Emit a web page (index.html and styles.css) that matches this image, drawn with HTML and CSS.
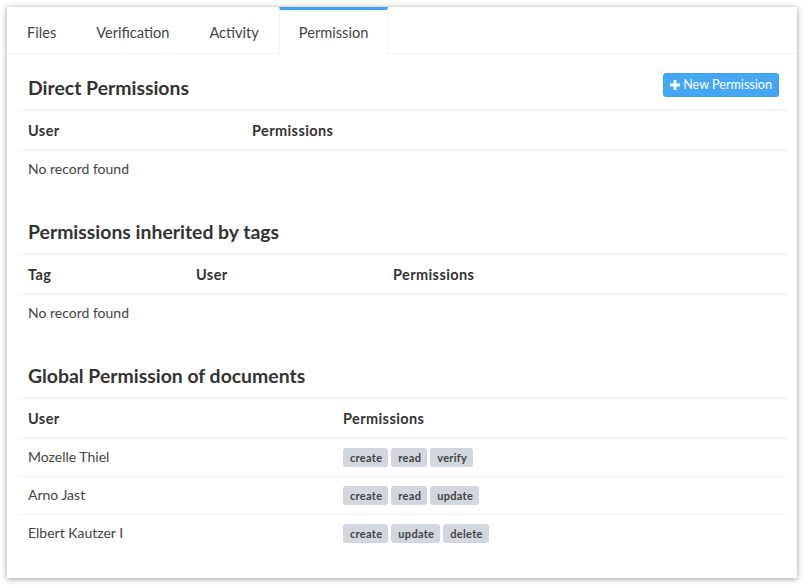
FILE: index.html
```html
<!DOCTYPE html>
<html>
<head>
<meta charset="utf-8">
<link rel="stylesheet" href="styles.css">
</head>
<body>
<div class="card">
  <ul class="tabs">
    <li class="tab">Files</li>
    <li class="tab">Verification</li>
    <li class="tab">Activity</li>
    <li class="tab active">Permission</li>
  </ul>
  <div class="content">
    <section class="section">
      <div class="section-head">
        <h3 class="title">Direct Permissions</h3>
        <button class="btn"><svg class="plus" viewBox="0 0 10 10" width="10" height="10"><path d="M3.6 0h2.8v3.6H10v2.8H6.4V10H3.6V6.4H0V3.6h3.6z" fill="#fff"/></svg>New Permission</button>
      </div>
      <table class="tbl">
        <colgroup><col class="c1a"><col></colgroup>
        <thead><tr><th>User</th><th>Permissions</th></tr></thead>
        <tbody><tr><td colspan="2">No record found</td></tr></tbody>
      </table>
    </section>
    <section class="section">
      <div class="section-head">
        <h3 class="title">Permissions inherited by tags</h3>
      </div>
      <table class="tbl">
        <colgroup><col class="c2a"><col class="c2b"><col></colgroup>
        <thead><tr><th>Tag</th><th>User</th><th>Permissions</th></tr></thead>
        <tbody><tr><td colspan="3">No record found</td></tr></tbody>
      </table>
    </section>
    <section class="section last">
      <div class="section-head">
        <h3 class="title">Global Permission of documents</h3>
      </div>
      <table class="tbl">
        <colgroup><col class="c3a"><col></colgroup>
        <thead><tr><th>User</th><th>Permissions</th></tr></thead>
        <tbody>
          <tr><td>Mozelle Thiel</td><td><span class="lbl">create</span><span class="lbl">read</span><span class="lbl">verify</span></td></tr>
          <tr><td>Arno Jast</td><td><span class="lbl">create</span><span class="lbl">read</span><span class="lbl">update</span></td></tr>
          <tr><td>Elbert Kautzer I</td><td><span class="lbl">create</span><span class="lbl">update</span><span class="lbl">delete</span></td></tr>
        </tbody>
      </table>
    </section>
  </div>
</div>
</body>
</html>
```

FILE: styles.css
```css
* { box-sizing: border-box; }
html, body { margin: 0; background: #fff; }
body {
  padding: 7px 8px 7px 7px;
  font-family: "Source Sans Pro", Lato, "Liberation Sans", sans-serif;
  font-size: 14px;
  color: #333;
}
.card {
  background: #fff;
  box-shadow: 0 1px 6px rgba(0,0,0,0.4);
  height: 571px;
}
.tabs {
  list-style: none;
  margin: 0;
  padding: 0;
  display: flex;
  border-bottom: 1px solid #f2f2f2;
  height: 47px;
}
.tab {
  padding: 0 19px 0 19px;
  border: 1px solid transparent;
  border-top: 3px solid transparent;
  border-bottom: 0;
  line-height: 46px;
  color: #444;
  font-size: 14.6px;
}
.tab.active {
  border-top-color: #42a5f5;
  border-left-color: #f2f2f2;
  border-right-color: #f2f2f2;
  background: #fff;
  margin-bottom: -1px;
  height: 47px;
}
.content { padding: 18px 10px 0 12px; }
.section { margin-bottom: 28px; }
.section-head {
  display: flex;
  align-items: center;
  justify-content: space-between;
  height: 30px;
  margin-bottom: 7px;
  padding: 0 8px 0 9px;
}
.title {
  margin: 0;
  font-size: 19.4px;
  font-weight: 700;
  color: #333;
}
.btn {
  display: flex;
  align-items: center;
  gap: 3px;
  height: 24px;
  padding: 0 6px 0 6px;
  background: #45a6f5;
  border: 1px solid #3d9ee9;
  border-radius: 3px;
  color: #fff;
  font-family: inherit;
  font-size: 12.6px;
  margin-top: -5px;
}
.plus { display: block; }
.tbl {
  width: 100%;
  border-collapse: collapse;
}
.c1a { width: 224px; }
.c2a { width: 168px; }
.c2b { width: 197px; }
.c3a { width: 315px; }
.tbl th {
  text-align: left;
  font-weight: 700;
  font-size: 14.5px;
  letter-spacing: 0.4px;
  padding: 10px 9px 8px;
  line-height: 20px;
  border-top: 2px solid #f4f4f4;
  border-bottom: 2px solid #f4f4f4;
  color: #333;
}
.tbl td {
  padding: 8px 9px 9px;
  line-height: 20px;
  border-top: 1px solid #f4f4f4;
  color: #444;
}
.lbl {
  display: inline-block;
  background: #d2d6de;
  color: #444;
  font-size: 11px;
  font-weight: 700;
  letter-spacing: 0.3px;
  line-height: 13px;
  padding: 3px 6px 3px 7px;
  border-radius: 3px;
  margin: 1px 3px 0 0;
  vertical-align: top;
}
```
